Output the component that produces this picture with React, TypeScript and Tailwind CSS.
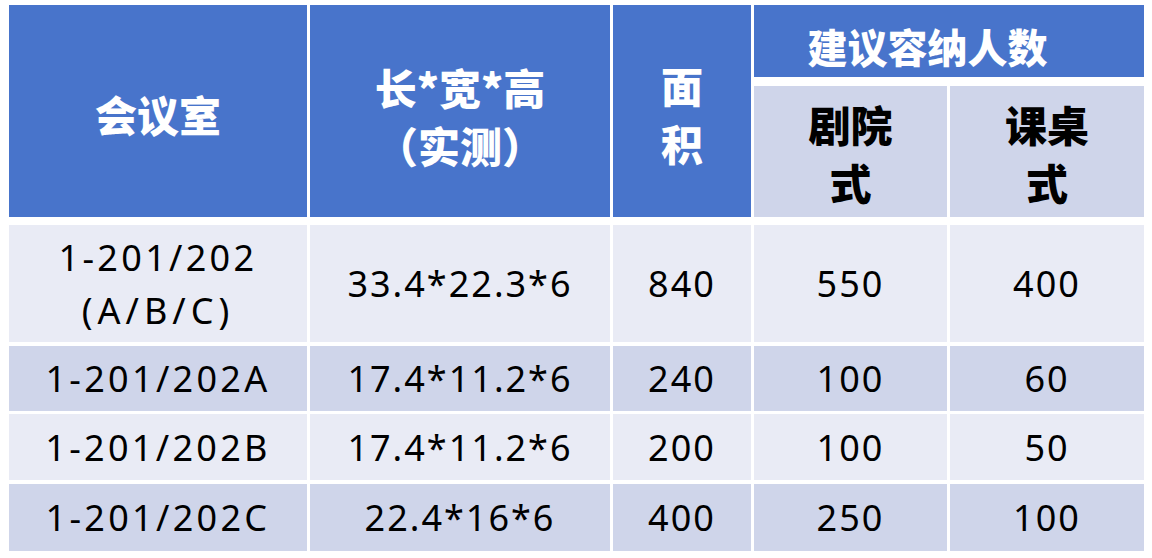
const COLS = "grid grid-cols-[298px_300px_138px_193px_194px] gap-x-[3px]";

const HEAD = "bg-[#4874cb] text-white font-black flex items-center justify-center text-center";
const SUB = "bg-[#cfd5ea] text-black font-black flex items-center justify-center text-center";

const ROWS = [
  { room: ["1-201/202", "(A/B/C)"], size: "33.4*22.3*6", area: "840", theatre: "550", desk: "400", h: "h-[117px]", band: "bg-[#e9ebf5]" },
  { room: ["1-201/202A"], size: "17.4*11.2*6", area: "240", theatre: "100", desk: "60", h: "h-[65px]", band: "bg-[#cfd5ea]" },
  { room: ["1-201/202B"], size: "17.4*11.2*6", area: "200", theatre: "100", desk: "50", h: "h-[66px]", band: "bg-[#e9ebf5]" },
  { room: ["1-201/202C"], size: "22.4*16*6", area: "400", theatre: "250", desk: "100", h: "h-[67px]", band: "bg-[#cfd5ea]" },
];

function Cell({ band, className = "", children }: { band: string; className?: string; children: React.ReactNode }) {
  return (
    <div className={`${band} ${className} flex flex-col items-center justify-center text-center text-black`}>
      {children}
    </div>
  );
}

export default function App() {
  return (
    <div className="w-[1152px] h-[558px] bg-white pl-[9px] pt-[5px]">
      <div
        className="text-[42px] leading-[58px]"
        style={{ fontFamily: '"Noto Sans CJK SC", "Noto Sans", sans-serif' }}
      >
        <div className={`${COLS} grid-rows-[72px_131px] gap-y-[9px]`}>
          <div className={`${HEAD} row-span-2 pt-[6px]`}>会议室</div>
          <div className={`${HEAD} row-span-2 flex-col pt-[10px]`}>
            <span>长*宽*高</span>
            <span>（实测）</span>
          </div>
          <div className={`${HEAD} row-span-2 flex-col pt-[6px]`}>
            <span>面</span>
            <span>积</span>
          </div>
          <div className={`${HEAD} col-span-2 pt-[10px] pr-[43px] text-[40px]`}>建议容纳人数</div>
          <div className={`${SUB} flex-col pt-[2px]`}>
            <span>剧院</span>
            <span>式</span>
          </div>
          <div className={`${SUB} flex-col pt-[2px]`}>
            <span>课桌</span>
            <span>式</span>
          </div>
        </div>
      </div>

      <div
        className="mt-[8px] flex flex-col gap-y-[3.5px] text-[36px] leading-[53px] tracking-[2px]"
        style={{ fontFamily: '"Noto Sans", "Noto Sans CJK SC", sans-serif' }}
      >
        {ROWS.map((r) => (
          <div key={r.room.join("")} className={`${COLS} ${r.h}`}>
            <Cell band={r.band} className="tracking-[3.3px]">
              {r.room.map((line, i) => (
                <span key={line} className={i === 1 ? "tracking-[5px]" : ""}>
                  {line}
                </span>
              ))}
            </Cell>
            <Cell band={r.band}>{r.size}</Cell>
            <Cell band={r.band}>{r.area}</Cell>
            <Cell band={r.band}>{r.theatre}</Cell>
            <Cell band={r.band}>{r.desk}</Cell>
          </div>
        ))}
      </div>
    </div>
  );
}
